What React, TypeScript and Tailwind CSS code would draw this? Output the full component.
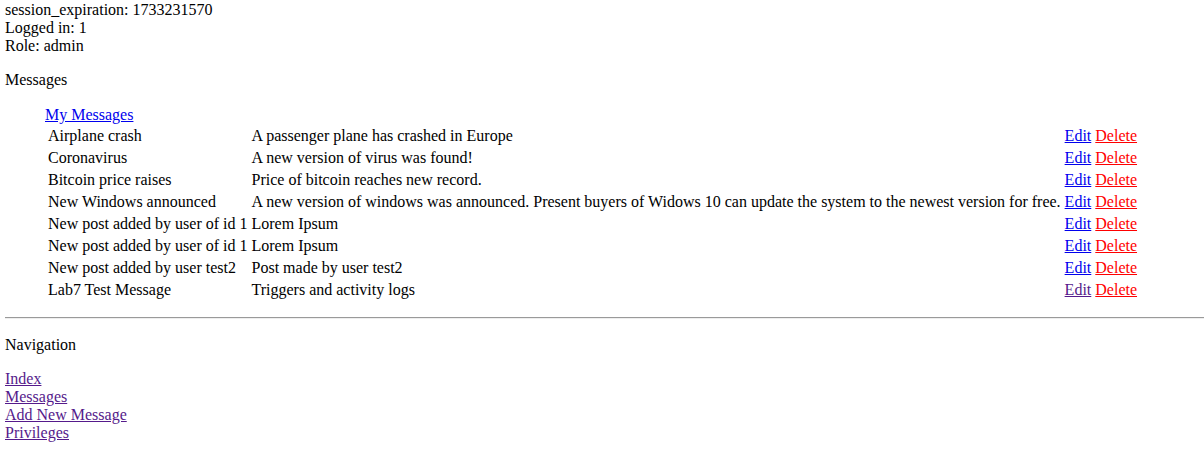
const messages = [
  { title: 'Airplane crash', body: 'A passenger plane has crashed in Europe', visited: false },
  { title: 'Coronavirus', body: 'A new version of virus was found!', visited: false },
  { title: 'Bitcoin price raises', body: 'Price of bitcoin reaches new record.', visited: false },
  {
    title: 'New Windows announced',
    body: 'A new version of windows was announced. Present buyers of Widows 10 can update the system to the newest version for free.',
    visited: false,
  },
  { title: 'New post added by user of id 1', body: 'Lorem Ipsum', visited: false },
  { title: 'New post added by user of id 1', body: 'Lorem Ipsum', visited: false },
  { title: 'New post added by user test2', body: 'Post made by user test2', visited: false },
  { title: 'Lab7 Test Message', body: 'Triggers and activity logs', visited: true },
];

const navLinks = ['Index', 'Messages', 'Add New Message', 'Privileges'];

const App = () => {
  return (
    <div className="pl-[5px] pt-px font-['Liberation_Serif',serif] text-base leading-[normal] text-black bg-white min-h-[468px]">
      <div>session_expiration: 1733231570</div>
      <div>Logged in: 1</div>
      <div>Role: admin</div>

      <p className="mt-4">Messages</p>

      <div className="ml-10 mt-[17px]">
        <table className="border-separate border-spacing-[2px]">
          <caption className="text-left">
            <a href="#" className="text-[#0000ee] underline">My Messages</a>
          </caption>
          <tbody>
            {messages.map((m, i) => (
              <tr key={i}>
                <td className="p-px text-left align-middle">{m.title}</td>
                <td className="p-px text-left align-middle">{m.body}</td>
                <td className="p-px text-left align-middle whitespace-nowrap">
                  <a href="#" className={m.visited ? 'text-[#551a8b] underline' : 'text-[#0000ee] underline'}>Edit</a>{' '}
                  <a href="#" className="text-[#ff0000] underline">Delete</a>
                </td>
              </tr>
            ))}
          </tbody>
        </table>
      </div>

      <hr className="mt-[15px] border-t border-b border-t-[#9a9a9a] border-b-[#eeeeee]" />

      <p className="mt-[17px]">Navigation</p>

      <div className="mt-4">
        {navLinks.map((l) => (
          <div key={l}>
            <a href="#" className="text-[#551a8b] underline">{l}</a>
          </div>
        ))}
      </div>
    </div>
  );
};

export default App;
